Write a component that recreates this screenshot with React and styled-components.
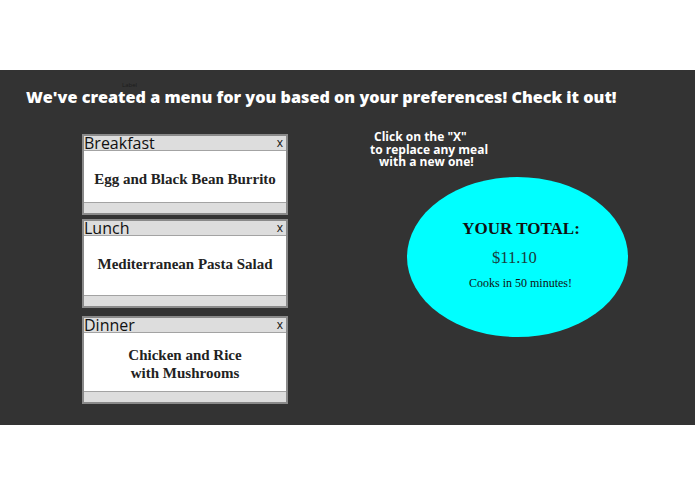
import React from 'react'
import styled, { createGlobalStyle } from 'styled-components'

const GlobalStyle = createGlobalStyle`
  html, body {
    margin: 0;
    padding: 0;
    background: #ffffff;
  }
`

const Page = styled.div`
  width: 695px;
  height: 494px;
  padding-top: 70px;
  box-sizing: border-box;
  background: #ffffff;
`

const Band = styled.section`
  height: 355px;
  background: #333333;
  padding-top: 12px;
  box-sizing: border-box;
`

const TinyLabel = styled.div`
  height: 7px;
  padding-left: 122px;
  font-family: 'Open Sans', sans-serif;
  font-size: 6px;
  line-height: 7px;
  color: #1c1c1c;
`

const Title = styled.h1`
  margin: 0;
  padding-left: 26px;
  font-family: 'Open Sans', sans-serif;
  font-weight: 800;
  font-size: 16.2px;
  line-height: 16px;
  color: #ffffff;
  white-space: nowrap;
`

const Content = styled.div`
  display: flex;
  align-items: flex-start;
  margin-top: 29px;
`

const MealColumn = styled.div`
  display: flex;
  flex-direction: column;
  padding-left: 82px;
  width: 206px;
`

const MealCard = styled.div`
  margin-top: ${props => props.gap || 0}px;
  border: 2px solid #8a8a8a;
  background: #dddddd;
`

const MealHeader = styled.div`
  display: flex;
  justify-content: space-between;
  align-items: flex-start;
  height: 14px;
  border-bottom: 1px solid #a3a3a3;
  font-family: 'Open Sans', sans-serif;
  font-size: 16px;
  line-height: 14px;
  color: #111111;
  overflow: hidden;
`

const Close = styled.span`
  font-size: 12px;
  line-height: 14px;
  padding-right: 3px;
  cursor: pointer;
`

const MealBody = styled.div`
  height: ${props => props.h}px;
  display: flex;
  align-items: center;
  justify-content: center;
  background: #ffffff;
  border-bottom: 1px solid #a3a3a3;
  font-family: 'Liberation Serif', serif;
  font-weight: 700;
  font-size: 15px;
  line-height: 18px;
  color: #222222;
  text-align: center;
  padding-top: ${props => Math.max(props.shift, 0)}px;
  padding-bottom: ${props => Math.max(-props.shift, 0)}px;
  box-sizing: border-box;
`

const MealFooter = styled.div`
  height: 10px;
`

const SideColumn = styled.div`
  display: flex;
  flex-direction: column;
`

const Hint = styled.div`
  margin: -3px 0 0 82px;
  font-family: 'Open Sans', sans-serif;
  font-weight: 700;
  font-size: 12px;
  line-height: 12.6px;
  color: #ffffff;
`

const HintLine = styled.div`
  padding-left: ${props => props.indent || 0}px;
  white-space: nowrap;
`

const TotalBubble = styled.div`
  margin: 8px 0 0 119px;
  width: 221px;
  height: 160px;
  border-radius: 50%;
  background: #00ffff;
  display: flex;
  flex-direction: column;
  align-items: center;
  padding-top: 42px;
  box-sizing: border-box;
  font-family: 'Liberation Serif', serif;
  color: #111111;
`

const TotalHeading = styled.div`
  font-size: 17px;
  font-weight: 700;
  line-height: 20px;
  margin-left: 7px;
`

const TotalPrice = styled.div`
  font-size: 16.5px;
  line-height: 20px;
  margin-top: 9px;
  margin-right: 6px;
  color: #183c3c;
`

const CookTime = styled.div`
  font-size: 12px;
  line-height: 16px;
  margin-top: 7px;
  margin-left: 6px;
`

const meals = [
  { name: 'Breakfast', dish: ['Egg and Black Bean Burrito'], h: 52, gap: 0, shift: 4 },
  { name: 'Lunch', dish: ['Mediterranean Pasta Salad'], h: 60, gap: 4, shift: -4 },
  { name: 'Dinner', dish: ['Chicken and Rice', 'with Mushrooms'], h: 59, gap: 8, shift: 4 },
]

const hint = [
  { text: 'Click on the "X"', indent: 4 },
  { text: 'to replace any meal', indent: 0 },
  { text: 'with a new one!', indent: 9 },
]

const App = () => {
  return (
    <Page>
      <GlobalStyle />
      <Band>
        <TinyLabel>Label</TinyLabel>
        <Title>We've created a menu for you based on your preferences! Check it out!</Title>
        <Content>
          <MealColumn>
            {meals.map((meal) =>
              <MealCard gap={meal.gap} key={meal.name}>
                <MealHeader>
                  <span>{meal.name}</span>
                  <Close>x</Close>
                </MealHeader>
                <MealBody h={meal.h} shift={meal.shift}>
                  <div>
                    {meal.dish.map((line) => <div key={line}>{line}</div>)}
                  </div>
                </MealBody>
                <MealFooter />
              </MealCard>
            )}
          </MealColumn>
          <SideColumn>
            <Hint>
              {hint.map((line) =>
                <HintLine indent={line.indent} key={line.text}>{line.text}</HintLine>
              )}
            </Hint>
            <TotalBubble>
              <TotalHeading>YOUR TOTAL:</TotalHeading>
              <TotalPrice>$11.10</TotalPrice>
              <CookTime>Cooks in 50 minutes!</CookTime>
            </TotalBubble>
          </SideColumn>
        </Content>
      </Band>
    </Page>
  )
}

export default App
